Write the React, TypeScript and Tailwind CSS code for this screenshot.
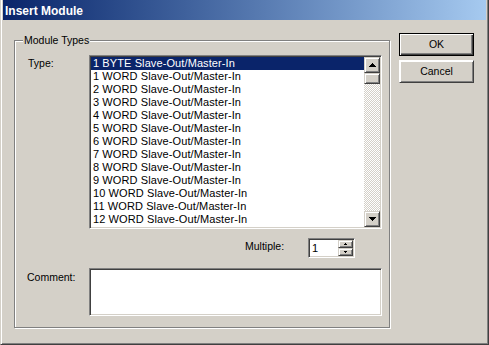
import React from 'react';

const items = [
  '1 BYTE Slave-Out/Master-In',
  ...Array.from({ length: 13 }, (_, i) => `${i + 1} WORD Slave-Out/Master-In`),
];

// small pixel triangle, built from rows so it stays crisp
function Arrow({ size, down }: { size: number; down?: boolean }) {
  const rows = Array.from({ length: size }, (_, i) => i);
  const w = size * 2 - 1;
  return (
    <svg width={w} height={size} viewBox={`0 0 ${w} ${size}`} shapeRendering="crispEdges">
      {rows.map((r) => {
        const y = down ? size - 1 - r : r;
        const half = size - 1 - r;
        return <rect key={r} x={half} y={y} width={w - half * 2} height={1} fill="#000" />;
      })}
    </svg>
  );
}

const raised =
  'border border-t-[#d4d0c8] border-l-[#d4d0c8] border-r-[#404040] border-b-[#404040] shadow-[inset_1px_1px_0_#fff,inset_-1px_-1px_0_#808080] bg-[#d4d0c8]';
const sunken =
  'border border-t-[#808080] border-l-[#808080] border-r-white border-b-white shadow-[inset_1px_1px_0_#404040,inset_-1px_-1px_0_#d4d0c8] p-[1px]';

export default function App() {
  return (
    <div
      className="w-[489px] h-[345px] bg-[#d4d0c8] flex flex-col border-l border-r border-b border-l-[#d4d0c8] border-r-[#404040] border-b-[#404040] shadow-[inset_1px_0_0_#fff,inset_-1px_-1px_0_#808080] px-[2px] pb-[2px] text-black overflow-hidden"
      style={{ fontFamily: '"Liberation Sans", Arial, sans-serif' }}
    >
      {/* title bar */}
      <div className="h-[20px] shrink-0 bg-gradient-to-r from-[#0a246a] to-[#a6caf0] pl-[2px] pt-[3px] text-white font-bold text-[12px] leading-[17px]">
        Insert Module
      </div>

      <div className="flex pt-[13px]">
        {/* group box */}
        <div className="relative ml-[11px] w-[376px] pt-[7px]">
          <span className="absolute left-[9px] top-0 px-[1px] bg-[#d4d0c8] text-[10.5px] leading-[14px]">
            Module Types
          </span>
          <div className="h-[288px] border border-[#808080] shadow-[inset_1px_1px_0_#fff,1px_1px_0_#fff] pt-[14px] text-[10.5px] leading-[13px]">
            {/* type + list */}
            <div className="flex pl-[13px]">
              <div className="w-[61px] mt-[2px]">Type:</div>
              <div className={`w-[293px] h-[174px] bg-white flex ${sunken}`}>
                <div className="flex-1 overflow-hidden text-[11px] leading-[13px]">
                  {items.map((t, i) => (
                    <div
                      key={t}
                      className={`h-[13px] pl-[2px] whitespace-nowrap tracking-[0.1px] ${
                        i === 0 ? 'bg-[#0a246a] text-white' : ''
                      }`}
                    >
                      {t}
                    </div>
                  ))}
                </div>
                <div className="w-[16px] flex flex-col">
                  <div className={`h-[16px] flex items-center justify-center ${raised}`}>
                    <Arrow size={4} />
                  </div>
                  <div className={`h-[11px] ${raised}`} />
                  <div className="flex-1 bg-[image:repeating-conic-gradient(#d4d0c8_0_25%,#fff_0_50%)] bg-[length:2px_2px]" />
                  <div className={`h-[16px] flex items-center justify-center ${raised}`}>
                    <Arrow size={4} down />
                  </div>
                </div>
              </div>
            </div>

            {/* multiple */}
            <div className="flex mt-[9px] pl-[230px]">
              <div className="w-[63px] mt-[2px]">Multiple:</div>
              <div className={`w-[47px] h-[20px] bg-white flex ${sunken}`}>
                <div className="flex-1 pl-[2px] text-[11px] leading-[16px]">1</div>
                <div className="w-[15px] flex flex-col">
                  <div className={`h-[8px] flex items-center justify-center ${raised}`}>
                    <Arrow size={2} />
                  </div>
                  <div className={`h-[8px] flex items-center justify-center ${raised}`}>
                    <Arrow size={2} down />
                  </div>
                </div>
              </div>
            </div>

            {/* comment */}
            <div className="flex mt-[10px] pl-[12px]">
              <div className="w-[62px] mt-[3px]">Comment:</div>
              <div className={`w-[293px] h-[48px] bg-white ${sunken}`} />
            </div>
          </div>
        </div>

        {/* buttons */}
        <div className="ml-[9px] flex flex-col text-[10.5px]">
          <button className="w-[75px] h-[23px] border border-black bg-[#d4d0c8] shadow-[inset_1px_1px_0_#fff,inset_-1px_-1px_0_#404040,inset_-2px_-2px_0_#808080] leading-[21px]">
            OK
          </button>
          <button className={`mt-[4px] w-[75px] h-[23px] leading-[21px] ${raised} border-t-white border-l-white shadow-[inset_-1px_-1px_0_#808080]`}>
            Cancel
          </button>
        </div>
      </div>
    </div>
  );
}
